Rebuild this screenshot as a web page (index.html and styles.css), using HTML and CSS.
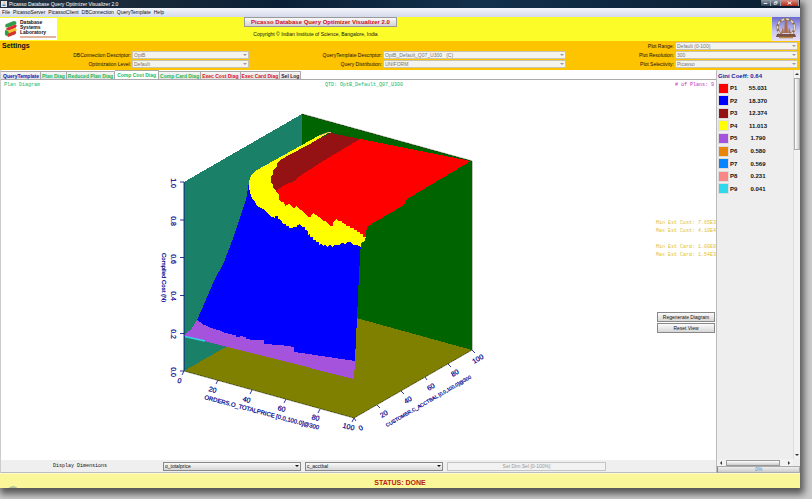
FILE: index.html
```html
<!DOCTYPE html>
<html lang="en">
<head>
<meta charset="utf-8">
<title>Picasso Database Query Optimizer Visualizer 2.0</title>
<link rel="stylesheet" href="styles.css">
</head>
<body>
<div class="window">
  <header class="titlebar">
    <svg class="app-icon" viewBox="0 0 6 6" aria-hidden="true"><rect width="6" height="6" fill="#dfe6ee"/><path d="M1.5 3.5h3v1.5h-3z" fill="#5b83b5"/><path d="M3 .7q1 .8 0 2" stroke="#e07020" stroke-width=".7" fill="none"/></svg>
    <span class="titlebar-text">Picasso Database Query Optimizer Visualizer 2.0</span>
    <div class="window-controls">
      <button class="win-btn" aria-label="Minimize"><svg viewBox="0 0 10 6"><path d="M3 3.5h4" stroke="#fff"/></svg></button>
      <button class="win-btn" aria-label="Restore"><svg viewBox="0 0 10 6"><path d="M4 1.5h3v2M3.5 2.500h2.500v2h-2.500z" stroke="#fff" stroke-width=".8" fill="none"/></svg></button>
      <button class="win-btn win-close" aria-label="Close"><svg viewBox="0 0 18 6"><path d="M7 1.500l4 3M11 1.500l-4 3" stroke="#fff"/></svg></button>
    </div>
  </header>
  <nav class="menubar">
    <a href="#">File</a><a href="#">PicassoServer</a><a href="#">PicassoClient</a><a href="#">DBConnection</a><a href="#">QueryTemplate</a><a href="#">Help</a>
  </nav>

  <div class="banner">
    <div class="logo">
      <svg class="logo-mark" viewBox="0 0 17 20" aria-hidden="true">
        <path d="M3 4.500L12 1q4 0 3 3.500L6 8Q1 9 3 4.500z" fill="#2fa04a"/>
        <path d="M3 10L6 8l8-3q3 1 0 4L6 12z" fill="#d8322c"/>
        <path d="M3 10.500l3 1.500 8-3q3 1.500 0 4l-7 3z" fill="#f2c62c"/>
        <path d="M2.500 11Q6 11 7 15.500L5 18Q1 18 2.500 11z" fill="#2fa04a"/>
        <path d="M6 15l8-3q2 2 0 4l-8 3q-2-1 0-4z" fill="#d8322c"/>
      </svg>
      <div class="logo-text"><p>Database</p><p>Systems</p><p>Laboratory</p><div class="logo-rule"></div></div>
    </div>
    <div class="banner-center">
      <button class="product">Picasso Database Query Optimizer Visualizer 2.0</button>
      <p class="copyright">Copyright © Indian Institute of Science, Bangalore, India</p>
    </div>
    <svg class="emblem" viewBox="0 0 28 24" aria-hidden="true">
      <defs><linearGradient id="sky" x2="0" y2="1"><stop stop-color="#6a6bd0"/><stop offset=".6" stop-color="#c9c6f0"/><stop offset="1" stop-color="#e8e0f4"/></linearGradient></defs>
      <rect width="28" height="24" fill="url(#sky)"/>
      <circle cx="14" cy="10.500" r="8.500" fill="none" stroke="#8f7250" stroke-width="2.500"/>
      <circle cx="14" cy="10.500" r="8.500" fill="none" stroke="#e6dcc8" stroke-width="1.500" stroke-dasharray="3 2"/>
      <path d="M13 3h2l1 13h-4zM9 16l2-6 1 6zM19 16l-2-6-1 6z" fill="#a86c50"/>
      <path d="M5 17h18l1 3H4z" fill="#7c5140"/><path d="M7 20.500h14" stroke="#b58a4c" stroke-width="1.500"/>
    </svg>
  </div>

  <section class="settings">
    <h2>Settings</h2>
    <label class="a2" for="dbc">DBConnection Descriptor:</label>
    <span class="combo b2"><select id="dbc" disabled><option>OptB</option></select></span>
    <label class="a3" for="opt">Optimization Level:</label>
    <span class="combo b3"><select id="opt" disabled><option>Default</option></select></span>
    <label class="c2" for="qtd">QueryTemplate Descriptor:</label>
    <span class="combo d2"><select id="qtd" disabled><option>OptB_Default_Q07_U300 &nbsp; (C)</option></select></span>
    <label class="c3" for="dist">Query Distribution:</label>
    <span class="combo d3"><select id="dist" disabled><option>UNIFORM</option></select></span>
    <label class="e1" for="range">Plot Range:</label>
    <span class="combo f1"><select id="range" disabled><option>Default (0-100)</option></select></span>
    <label class="e2" for="res">Plot Resolution:</label>
    <span class="combo f2"><select id="res" disabled><option>300</option></select></span>
    <label class="e3" for="sel">Plot Selectivity:</label>
    <span class="combo f3"><select id="sel" disabled><option>Picasso</option></select></span>
  </section>

  <div class="workspace">
    <main class="main">
      <div class="tabs" role="tablist">
        <button role="tab" class="tab navy">QueryTemplate</button>
        <button role="tab" class="tab green">Plan Diag</button>
        <button role="tab" class="tab green">Reduced Plan Diag</button>
        <button role="tab" class="tab green active" aria-selected="true">Comp Cost Diag</button>
        <button role="tab" class="tab green">Comp Card Diag</button>
        <button role="tab" class="tab red">Exec Cost Diag</button>
        <button role="tab" class="tab red">Exec Card Diag</button>
        <button role="tab" class="tab dark">Sel Log</button>
      </div>
      <div class="plot-head">
        <span class="ph-left">Plan Diagram</span>
        <span class="ph-mid">QTD: OptB_Default_Q07_U300</span>
        <span class="ph-right"># of Plans: 9</span>
      </div>
      <div class="plot-body">
        <svg class="plot" viewBox="1 92 655 368" role="img" aria-label="Compiled cost surface">
          <g shape-rendering="crispEdges">
            <path fill="#1b8068" d="M184 182L302 114V303L184 371z"/>
            <path fill="#006400" d="M302 114L472 161V350L302 303z"/>
            <path fill="#808000" d="M184 371L302 303L472 350L354 418z"/>
            <path fill="#0000ff" d="M249 182L246 200L240 218L232 241L224 262L213 283L205 302L197 320L225 341L354 370L355 360L359 275L361 240L320 205z"/>
            <path fill="#a552dc" d="M184 335L187 332L191 330L197 320L200 322L203 324V325H206V326L210 327V328H213V329H216V330H220V331L224 332V333H228V334H232V335H236V337H240V336L246 337V339L253 340H264V344L280 345L294 347V352L315 355L335 358L355 361L354 379L184 336z"/>
            <path fill="#ffff00" d="M330 132L320 135L255 171L251 176L249 182V188L250 192L252 198L255 202L258 207L261 208L265 210L268 214L272 217L275 218V216L278 216V219L281 220L283 224H286V226H289V228H292L294 227H297V225L300 224L302 227H305V230L308 231V235L310 234V237H313V240H316V242H319V245L321 243L323 246L325 244L327 247L330 245L332 247L335 245H339L342 243L345 244L347 242H351L353 245H357L361 247V243L365 241L366 235L367 210L300 150z"/>
            <path fill="#ff0000" d="M360 139L471 161L407 199L404 205L368 226L366 232V237L363 237V234L360 234V232L357 232V230L354 230V228L350 228V226L346 226V224L342 223V221L339 221L336 219L333 222V226H330L327 222L322 220L319 217L313 213L311 215V217L308 217L304 213L301 210L296 206L294 208L291 206L289 203L287 205L285 206L284 202H281L279 199V195L276 191L283 186L297 178L320 163z"/>
            <path fill="#941214" d="M330 133L360 139L320 163L297 178L294 181L283 186L276 191L273 188V185L271 183L271 176L273 174V170L275 168L277 166V163L280 160z"/>
          </g>
          <path d="M319 136L328 132.500H331" stroke="#ffb28c" fill="none"/>
          <path d="M185 336.500L205 341" stroke="#35d5ea" stroke-width="1.500"/>
          <path d="M180 182H184V371M180 220H184M180 257.500H184M180 295.500H184M180 333.500H184M180 371H184M184 371L182 375M218 380L216 384M252 390L250 394M286 399L284 403M320 409L318 413M354 418L352 422M354 418L356 421M377 405L380 408M401 391L404 394M425 377L427 380M448 364L451 367M472 350L475 353" stroke="#00008b" stroke-width=".8" fill="none"/>
          <path d="M184 371L354 418L472 350V161L302 114" stroke="#333a20" stroke-width=".6" fill="none"/>
          <g class="axis">
            <g text-anchor="middle">
              <text transform="translate(171 183) rotate(90)">1.0</text>
              <text transform="translate(171 221) rotate(90)">0.8</text>
              <text transform="translate(171 259) rotate(90)">0.6</text>
              <text transform="translate(171 296) rotate(90)">0.4</text>
              <text transform="translate(171 334) rotate(90)">0.2</text>
              <text transform="translate(171 372) rotate(90)">0.0</text>
              <text transform="translate(179 383) rotate(15)">0</text>
              <text transform="translate(212 392) rotate(15)">20</text>
              <text transform="translate(246 402) rotate(15)">40</text>
              <text transform="translate(281 411) rotate(15)">60</text>
              <text transform="translate(315 420) rotate(15)">80</text>
              <text transform="translate(348 429) rotate(15)">100</text>
              <text transform="translate(362 430) rotate(-30)">0</text>
              <text transform="translate(385 416) rotate(-30)">20</text>
              <text transform="translate(409 402) rotate(-30)">40</text>
              <text transform="translate(432 389) rotate(-30)">60</text>
              <text transform="translate(456 375) rotate(-30)">80</text>
              <text transform="translate(479 361) rotate(-30)">100</text>
            </g>
            <text class="axis-title" transform="translate(162 253) rotate(90)">Compiled Cost (N)</text>
            <text class="axis-title" transform="translate(204 399) rotate(15)">ORDERS.O_TOTALPRICE [0.0,100.0]@300</text>
            <text class="axis-small" transform="translate(387 427) rotate(-30)">CUSTOMER.C_ACCTBAL [0.0,100.0]@300</text>
          </g>
        </svg>
        <aside class="plot-side">
          <div class="estimates">
            <p>Min Est Cost: 7.65E3<br>Max Est Cost: 4.10E4</p>
            <p>Min Est Card: 1.00E0<br>Max Est Card: 1.54E3</p>
          </div>
          <button class="btn">Regenerate Diagram</button>
          <button class="btn">Reset View</button>
        </aside>
      </div>
      <div class="dimensions">
        <span class="dim-label">Display Dimensions</span>
        <span class="combo live"><select aria-label="First dimension"><option>o_totalprice</option></select></span>
        <span class="combo live"><select aria-label="Second dimension"><option>c_acctbal</option></select></span>
        <button class="dim-btn" disabled>Set Dim Sel [0-100%]</button>
      </div>
    </main>

    <aside class="legend">
      <div class="legend-body">
        <h3>Gini Coeff: 0.64</h3>
        <table>
          <tr><td><i class="sw p1"></i></td><th>P1</th><td class="num">55.031</td></tr>
          <tr><td><i class="sw p2"></i></td><th>P2</th><td class="num">18.370</td></tr>
          <tr><td><i class="sw p3"></i></td><th>P3</th><td class="num">12.374</td></tr>
          <tr><td><i class="sw p4"></i></td><th>P4</th><td class="num">11.013</td></tr>
          <tr><td><i class="sw p5"></i></td><th>P5</th><td class="num">1.790</td></tr>
          <tr><td><i class="sw p6"></i></td><th>P6</th><td class="num">0.580</td></tr>
          <tr><td><i class="sw p7"></i></td><th>P7</th><td class="num">0.569</td></tr>
          <tr><td><i class="sw p8"></i></td><th>P8</th><td class="num">0.231</td></tr>
          <tr><td><i class="sw p9"></i></td><th>P9</th><td class="num">0.041</td></tr>
        </table>
      </div>
      <div class="vscroll"><i class="arrow up"></i><div class="vthumb"></div><i class="arrow down"></i></div>
      <div class="hscroll"><i class="arrow left"></i><div class="hthumb"></div><i class="arrow right"></i></div>
      <div class="progress" role="progressbar" aria-valuenow="0">0%</div>
    </aside>
  </div>
  <footer class="status"><i class="orb"></i>STATUS: DONE</footer>
</div>
</body>
</html>
```
FILE: styles.css
```css
* { box-sizing: border-box; margin: 0; padding: 0; }

body {
  min-height: 100vh;
  padding: 0 12px 12px 0;
  background: #cbcbcb;
  font: 5px/8px "Liberation Sans", Arial, sans-serif;
  color: #111;
  overflow: hidden;
}

button, select { font: inherit; color: inherit; }
svg { display: block; }

.window {
  display: flex;
  flex-direction: column;
  min-height: calc(100vh - 12px);
  background: #fff;
  box-shadow: 2px 4px 7px 2px #555;
}

/* Title bar and menu */
.titlebar {
  display: flex;
  align-items: center;
  height: 8px;
  padding-left: 1px;
  gap: 2px;
  background: linear-gradient(90deg, #26313d, #0b2036 35%, #12304c 60%, #0b1d30);
  color: #fff;
}
.app-icon { width: 6px; height: 6px; }
.titlebar-text { flex: 1; }
.window-controls { display: flex; align-self: flex-start; padding-right: 1px; }
.win-btn {
  width: 10px;
  height: 6px;
  border: 0;
  border-right: 1px solid #9aa5b0;
  background: linear-gradient(#8c98a5, #2b3c4d);
}
.win-btn svg { width: 100%; height: 6px; }
.win-close { width: 18px; background: linear-gradient(#d88a80, #b02818); }
.menubar {
  display: flex;
  gap: 3px;
  height: 9px;
  padding: 0 2px;
  background: linear-gradient(#f4f6fb, #d5daec);
  line-height: 9px;
}
.menubar a { color: #111; text-decoration: none; }

/* Banner */
.banner {
  display: grid;
  grid-template-columns: 244fr auto 403fr;
  height: 24px;
  background: #fcfc28;
}
.logo {
  display: flex;
  align-items: center;
  gap: 2px;
  width: 57px;
  height: 22px;
  margin-top: 1px;
  padding-left: 3px;
  background: #fff;
}
.logo-mark { width: 15px; height: 20px; }
.logo-text { font-weight: bold; line-height: 5px; }
.logo-rule { height: 2px; width: 36px; margin-top: 1px; background: #e3b49a; }
.banner-center { text-align: center; }
.product {
  height: 10px;
  padding: 0 6px;
  border: 1px solid #999;
  background: linear-gradient(#fafafa, #d4d4d4);
  color: #d0101c;
  font-size: 6px;
  font-weight: bold;
  line-height: 8px;
}
.copyright { margin-top: 3px; padding-right: 10px; line-height: 8px; }
.emblem { width: 28px; height: 24px; justify-self: end; }

/* Settings */
.settings {
  display: grid;
  grid-template-columns: 132fr 117fr 134fr 183fr 109fr 123fr;
  grid-template-rows: repeat(3, 8px);
  row-gap: 1px;
  padding: 1px 2px 2px 0;
  background: #ffc400;
}
.settings h2 { grid-area: 1 / 1; padding-left: 2px; font-size: 7px; line-height: 8px; }
.settings label { text-align: right; padding-right: 1px; }
.a2 { grid-area: 2 / 1; } .a3 { grid-area: 3 / 1; }
.b2 { grid-area: 2 / 2; } .b3 { grid-area: 3 / 2; }
.c2 { grid-area: 2 / 3; } .c3 { grid-area: 3 / 3; }
.d2 { grid-area: 2 / 4; } .d3 { grid-area: 3 / 4; }
.e1 { grid-area: 1 / 5; } .e2 { grid-area: 2 / 5; } .e3 { grid-area: 3 / 5; }
.f1 { grid-area: 1 / 6; } .f2 { grid-area: 2 / 6; } .f3 { grid-area: 3 / 6; }

.combo { position: relative; display: block; }
.combo select {
  display: block;
  width: 100%;
  height: 8px;
  padding: 0 1px;
  appearance: none;
  border: 1px solid #c8c4b4;
  background: #f4f3ee;
  line-height: 6px;
}
.combo select:disabled { color: #777; opacity: 1; }
.combo::after {
  content: "";
  position: absolute;
  right: 2px;
  top: 3px;
  border: 2px solid transparent;
  border-top-color: #999;
  border-bottom: 0;
}

/* Workspace */
.workspace { flex: 1; display: flex; }
.main { flex: 1; display: flex; flex-direction: column; min-width: 0; border-left: 1px solid #ccc; }

.tabs {
  display: flex;
  align-items: flex-end;
  height: 10px;
  border-bottom: 1px solid #aaa;
}
.tab {
  height: 8px;
  padding: 0 1px;
  border: 1px solid #aaa;
  border-left-width: 0;
  border-bottom: 0;
  background: linear-gradient(#f6f6f6, #e2e2e2);
  font-weight: bold;
  line-height: 8px;
  white-space: nowrap;
}
.tab:first-child { padding-left: 2px; }
.tab.active { height: 9px; padding: 0 2px; background: #fff; }
.navy { color: #1414b4; }
.green { color: #22bb5c; }
.red { color: #d81818; }
.dark { color: #40181c; }

.plot-head {
  display: grid;
  grid-template-columns: 1fr auto 1fr;
  height: 12px;
  padding: 1px 2px 0 3px;
  font-family: "Liberation Mono", monospace;
  color: #20b45c;
  line-height: 8px;
}
.plot-head .ph-mid { padding-left: 10px; }
.plot-head .ph-right { text-align: right; color: #c02cc0; }

.plot-body { flex: 1; display: flex; min-height: 0; }
.plot { flex: 1; min-width: 0; }
.plot-side {
  width: 60px;
  padding: 127px 1px 0 0;
  display: flex;
  flex-direction: column;
  gap: 1px;
}
.estimates {
  margin-bottom: 52px;
  font-family: "Liberation Mono", monospace;
  color: #e0c030;
  white-space: nowrap;
}
.estimates p { margin-bottom: 8px; }
.estimates p:last-child { margin-bottom: 0; }
.btn {
  height: 10px;
  margin-left: 1px;
  border: 1px solid #888;
  background: linear-gradient(#fbfbfb, #d6d6d6);
  line-height: 8px;
  white-space: nowrap;
}

.axis { font-family: "Liberation Sans Narrow", "Liberation Sans", sans-serif; font-size: 7px; fill: #00008b; stroke: #00008b; stroke-width: .2px; }
.axis-title { font-size: 6px; }
.axis-small { font-size: 5px; }

.dimensions {
  display: grid;
  grid-template-columns: 158fr 138fr 138fr 159fr 106fr;
  column-gap: 4px;
  align-items: center;
  height: 13px;
  background: #efefef;
  border-bottom: 1px solid #bbb;
}
.dim-label { text-align: center; font-family: "Liberation Mono", monospace; }
.live select { height: 9px; border-color: #888; background: linear-gradient(#f8f8f8, #d8d8d8); line-height: 7px; }
.live::after { border-top-color: #111; }
.dim-btn { height: 9px; border: 1px solid #c4c4c4; background: #f2f2f2; color: #999; line-height: 7px; }

/* Legend */
.legend {
  display: grid;
  grid-template-columns: 1fr 7px;
  grid-template-rows: 1fr 7px 7px;
  width: 84px;
  border-left: 1px solid #bbb;
  background: #eee;
}
.legend-body { padding: 2px 0 0 1px; font-size: 6px; }
.legend h3 { color: #1c1c9c; font-size: 6px; line-height: 9px; }
.legend table { height: 113px; margin-top: 1px; border-collapse: collapse; font-weight: bold; }
.legend td, .legend th { line-height: 10px; vertical-align: middle; }
.legend th { width: 16px; padding-left: 1px; text-align: left; }
.num { width: 26px; text-align: center; }
.sw { display: block; width: 11px; height: 11px; border: 1px solid #ddd; }
.p1 { background: #ff0000; } .p2 { background: #0000ff; } .p3 { background: #941214; }
.p4 { background: #ffff00; } .p5 { background: #a552dc; } .p6 { background: #e88408; }
.p7 { background: #0884ff; } .p8 { background: #f88888; } .p9 { background: #30d8ec; }

.vscroll {
  display: flex;
  flex-direction: column;
  align-items: center;
  padding: 3px 0;
  border-left: 1px solid #ddd;
  background: #f2f2f2;
}
.vthumb { width: 6px; height: 72px; margin: 3px 0 auto; border: 1px solid #aaa; background: linear-gradient(90deg, #fff, #ccc); }
.hscroll { display: flex; align-items: center; gap: 4px; padding: 0 3px; background: #f2f2f2; }
.hthumb { width: 54px; height: 6px; border: 1px solid #999; background: linear-gradient(#fff, #ccc); }
.hscroll .right { margin-left: auto; }
.arrow { border: 2px solid transparent; }
.up { border-top: 0; border-bottom-color: #333; }
.down { border-bottom: 0; border-top-color: #333; }
.left { border-left: 0; border-right-color: #333; }
.right { border-right: 0; border-left-color: #333; }
.progress {
  grid-column: 1 / 3;
  border: 1px solid #aaa;
  border-left: 1px solid #3a9be0;
  background: linear-gradient(#eee, #ccc);
  color: #3a9be0;
  line-height: 5px;
  text-align: center;
}

/* Status */
.status {
  position: relative;
  height: 15px;
  overflow: hidden;
  background: #faf79a;
  border-top: 1px solid #fdfbd0;
  color: #b8200c;
  font-size: 7px;
  font-weight: bold;
  line-height: 18px;
  text-align: center;
}
.orb { position: absolute; left: 7px; top: 12px; width: 12px; height: 12px; border-radius: 50%; background: #b4c49c; }
```
